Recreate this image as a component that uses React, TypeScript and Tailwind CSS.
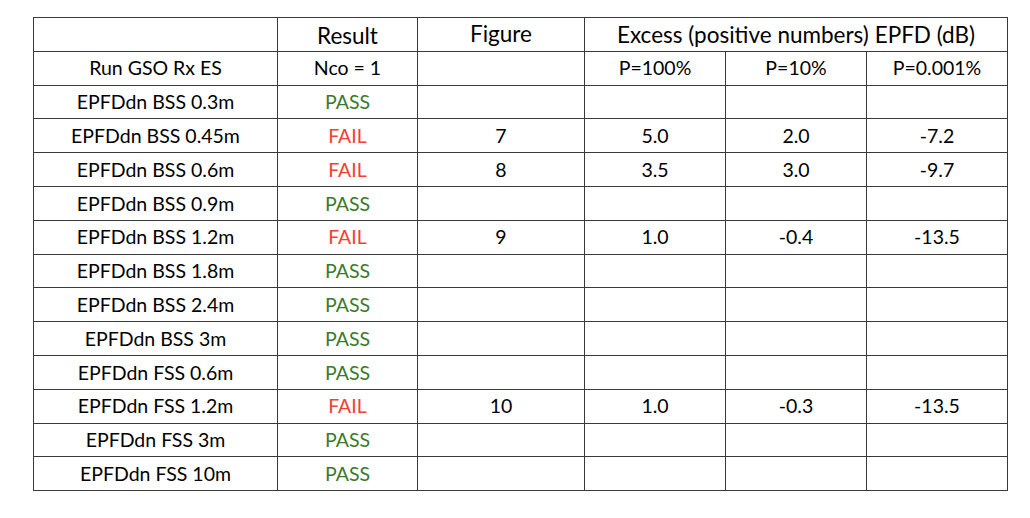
import React from 'react';

type Row = {
  name: string;
  result?: 'PASS' | 'FAIL';
  figure?: string;
  p100?: string;
  p10?: string;
  p001?: string;
};

const rows: Row[] = [
  { name: 'EPFDdn BSS 0.3m', result: 'PASS' },
  { name: 'EPFDdn BSS 0.45m', result: 'FAIL', figure: '7', p100: '5.0', p10: '2.0', p001: '-7.2' },
  { name: 'EPFDdn BSS 0.6m', result: 'FAIL', figure: '8', p100: '3.5', p10: '3.0', p001: '-9.7' },
  { name: 'EPFDdn BSS 0.9m', result: 'PASS' },
  { name: 'EPFDdn BSS 1.2m', result: 'FAIL', figure: '9', p100: '1.0', p10: '-0.4', p001: '-13.5' },
  { name: 'EPFDdn BSS 1.8m', result: 'PASS' },
  { name: 'EPFDdn BSS 2.4m', result: 'PASS' },
  { name: 'EPFDdn BSS 3m', result: 'PASS' },
  { name: 'EPFDdn FSS 0.6m', result: 'PASS' },
  { name: 'EPFDdn FSS 1.2m', result: 'FAIL', figure: '10', p100: '1.0', p10: '-0.3', p001: '-13.5' },
  { name: 'EPFDdn FSS 3m', result: 'PASS' },
  { name: 'EPFDdn FSS 10m', result: 'PASS' },
];

const cell = 'border border-[#3a3a3a] text-center align-middle p-0';
const tr = 'h-[33.8px]';

const App: React.FC = () => {
  return (
    <div
      className="w-[1030px] h-[518px] bg-white pt-[17px] pl-[33px] text-black text-[19.5px] leading-none"
      style={{ fontFamily: 'Lato, "Liberation Sans", sans-serif' }}
    >
      <table className="border-collapse table-fixed w-[974px]">
        <colgroup>
          <col className="w-[244px]" />
          <col className="w-[140px]" />
          <col className="w-[167px]" />
          <col className="w-[141px]" />
          <col className="w-[141px]" />
          <col className="w-[141px]" />
        </colgroup>
        <tbody>
          {/* top header row is set a size up */}
          <tr className={`${tr} text-[22.5px]`}>
            <td className={cell}></td>
            <td className={`${cell} pt-[3px]`}>Result</td>
            <td className={`${cell} pb-[1px]`}>Figure</td>
            <td className={`${cell} pt-[1px]`} colSpan={3}>
              Excess (positive numbers) EPFD (dB)
            </td>
          </tr>
          <tr className={tr}>
            <td className={cell}>Run GSO Rx ES</td>
            <td className={cell}>Nco = 1</td>
            <td className={cell}></td>
            <td className={cell}>P=100%</td>
            <td className={cell}>P=10%</td>
            <td className={cell}>P=0.001%</td>
          </tr>
          {rows.map((r) => (
            <tr key={r.name} className={tr}>
              <td className={cell}>{r.name}</td>
              <td className={`${cell} ${r.result === 'PASS' ? 'text-[#3a7a2a]' : 'text-[#f5402f]'}`}>
                {r.result}
              </td>
              <td className={cell}>{r.figure}</td>
              <td className={cell}>{r.p100}</td>
              <td className={cell}>{r.p10}</td>
              <td className={cell}>{r.p001}</td>
            </tr>
          ))}
        </tbody>
      </table>
    </div>
  );
};

export default App;
